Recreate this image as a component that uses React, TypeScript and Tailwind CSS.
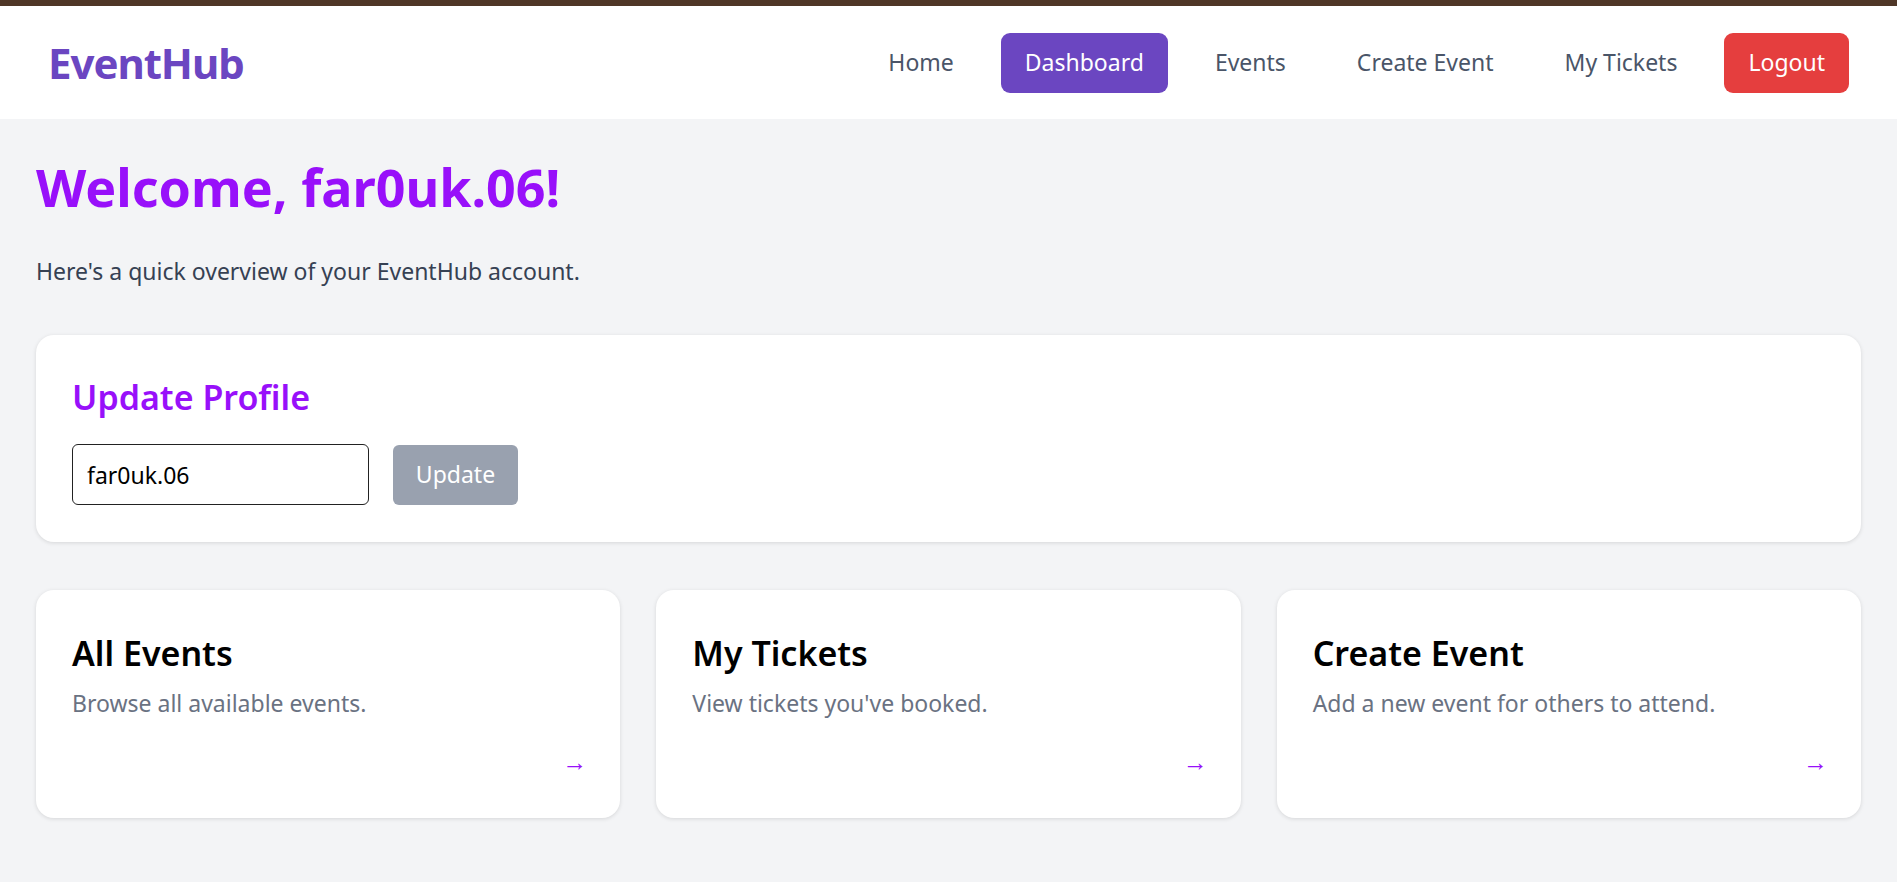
import { useState } from "react";

const links = ["Home", "Dashboard", "Events", "Create Event", "My Tickets"];

const cards = [
  { title: "All Events", text: "Browse all available events." },
  { title: "My Tickets", text: "View tickets you've booked." },
  { title: "Create Event", text: "Add a new event for others to attend." },
];

const App = () => {
  const [name, setName] = useState("far0uk.06");

  return (
    <div className="min-h-screen bg-[#f3f4f6] font-['Segoe_UI','Noto_Sans',sans-serif]">
      <div className="h-[6px] bg-[#4f3727]" />

      {/* NAVBAR */}
      <nav className="h-[113px] bg-white flex items-center justify-between px-[48px]">
        <span className="text-[42px] font-bold text-[#6b46c1] tracking-tight">EventHub</span>
        <div className="flex items-center gap-[23px]">
          {links.map((l) => (
            <a
              key={l}
              className={`h-[60px] flex items-center px-[24px] rounded-[9px] text-[23px] ${
                l === "Dashboard" ? "bg-[#6b46c1] text-white" : "text-[#4a5568]"
              }`}
            >
              {l}
            </a>
          ))}
          <button className="h-[60px] px-[24px] rounded-[9px] bg-[#e53e3e] text-white text-[23px]">
            Logout
          </button>
        </div>
      </nav>

      <main className="px-[36px] pt-[36px] pb-[48px]">
        <h1 className="text-[52px] leading-[64px] font-bold text-[#9810fa]">Welcome, {name}!</h1>
        <p className="mt-[34px] text-[23px] leading-[36px] text-[#364153]">
          Here's a quick overview of your EventHub account.
        </p>

        {/* PROFILE */}
        <div className="mt-[46px] bg-white rounded-[18px] shadow-[0_1px_4px_rgba(0,0,0,0.12)] px-[36px] pt-[38px] pb-[37px]">
          <h2 className="text-[34px] leading-[48px] font-semibold text-[#9810fa]">Update Profile</h2>
          <div className="mt-[23px] flex items-center gap-[24px]">
            <input
              value={name}
              onChange={(e) => setName(e.target.value)}
              className="w-[297px] h-[61px] border border-[#222] rounded-[6px] px-[14px] text-[23px] text-black outline-none"
            />
            <button className="w-[125px] h-[60px] rounded-[6px] bg-[#99a1af] text-white text-[23px]">
              Update
            </button>
          </div>
        </div>

        {/* CARDS */}
        <div className="mt-[48px] grid grid-cols-3 gap-[36px]">
          {cards.map((c) => (
            <div
              key={c.title}
              className="h-[228px] bg-white rounded-[18px] shadow-[0_1px_4px_rgba(0,0,0,0.12)] pl-[36px] pr-[33px] pt-[39px] pb-[43px] flex flex-col"
            >
              <h3 className="text-[34px] leading-[48px] font-semibold text-black">{c.title}</h3>
              <p className="mt-[10px] text-[23px] leading-[32px] text-[#6a7282]">{c.text}</p>
              <div className="mt-auto text-right text-[25px] leading-[28px] font-bold text-[#9810fa]">→</div>
            </div>
          ))}
        </div>
      </main>
    </div>
  );
};

export default App;
